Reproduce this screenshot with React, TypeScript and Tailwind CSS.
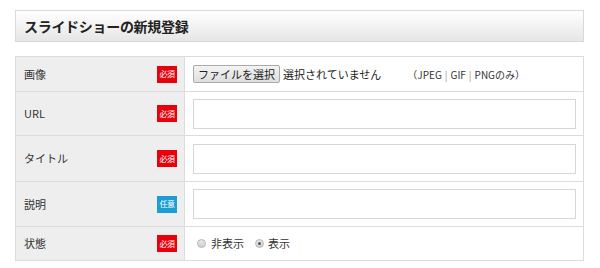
import React from "react";

const font = { fontFamily: '"Noto Sans CJK JP", "Noto Sans", sans-serif' };

const Badge = ({ optional }: { optional?: boolean }) => (
  <span
    className={`flex h-[17px] w-[20px] items-center justify-center text-[8px] leading-none text-white tracking-[-0.5px] ${
      optional ? "bg-[#1c9dd3]" : "bg-[#e8000b]"
    }`}
  >
    {optional ? "任意" : "必須"}
  </span>
);

const Row = ({
  label,
  optional,
  h,
  last,
  children,
}: {
  label: string;
  optional?: boolean;
  h: string;
  last?: boolean;
  children: React.ReactNode;
}) => (
  <div className={`flex ${h} ${last ? "" : "border-b border-[#dcdcdc]"}`}>
    <div className="flex w-[169px] shrink-0 items-center justify-between border-r border-[#dcdcdc] bg-[#eeeeee] pl-[8px] pr-[7px]">
      <span className="text-[11px] text-[#333]">{label}</span>
      <Badge optional={optional} />
    </div>
    <div className="flex flex-1 items-center pl-[8px] pr-[7px]">{children}</div>
  </div>
);

const TextBox = () => <div className="h-[30px] w-full border border-[#d6d6d6] bg-white" />;

const Radio = ({ checked }: { checked?: boolean }) => (
  <span className="flex h-[9px] w-[9px] items-center justify-center rounded-full border border-[#b5b5b5] bg-gradient-to-b from-[#e9e9e9] to-[#d0d0d0]">
    {checked && <span className="h-[3px] w-[3px] rounded-full bg-[#555]" />}
  </span>
);

export default function App() {
  return (
    <div className="h-[268px] w-[600px] bg-white pl-[15px] pr-[16px] pt-[10px] text-[#333]" style={font}>
      <div className="flex h-[32px] items-center border border-[#d9d9d9] bg-gradient-to-b from-[#ffffff] to-[#e6e6e6] pl-[8px]">
        <h1 className="text-[14px] font-bold tracking-[-0.3px] text-[#222]">スライドショーの新規登録</h1>
      </div>
      <div className="mt-[14px] border border-[#dcdcdc]">
        <Row label="画像" h="h-[35px]">
          <button className="h-[18px] rounded-[2px] border border-[#aaaaaa] bg-gradient-to-b from-[#f4f4f4] to-[#dedede] px-[4px] text-[11px] leading-none text-[#222]">
            ファイルを選択
          </button>
          <span className="ml-[3px] text-[11px] text-[#222]">選択されていません</span>
          <span className="ml-[26px] text-[10px] text-[#333]">
            （JPEG<span className="mx-[3px] text-[#999]">|</span>GIF<span className="mx-[3px] text-[#999]">|</span>PNGのみ）
          </span>
        </Row>
        <Row label="URL" h="h-[44px]">
          <TextBox />
        </Row>
        <Row label="タイトル" h="h-[46px]">
          <TextBox />
        </Row>
        <Row label="説明" optional h="h-[45px]">
          <TextBox />
        </Row>
        <Row label="状態" h="h-[33px]" last>
          <div className="flex items-center pl-[4px] text-[11px]">
            <Radio />
            <span className="ml-[5px]">非表示</span>
            <span className="ml-[11px]">
              <Radio checked />
            </span>
            <span className="ml-[4px]">表示</span>
          </div>
        </Row>
      </div>
    </div>
  );
}
